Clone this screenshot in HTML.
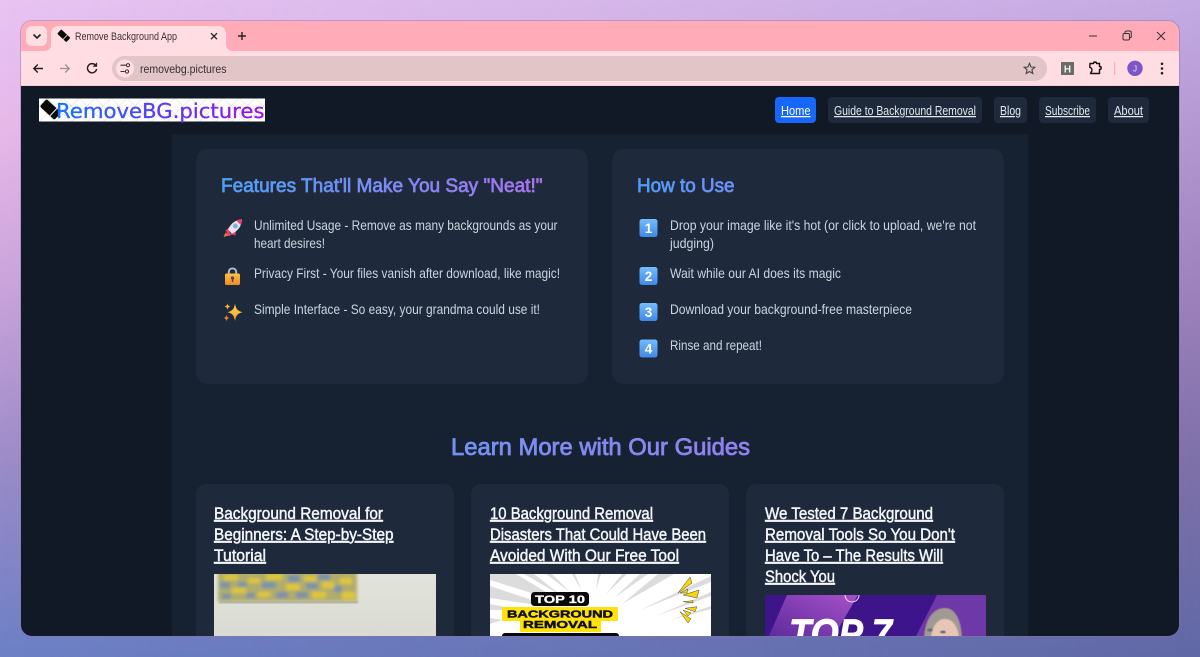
<!DOCTYPE html>
<html lang="en">
<head>
<meta charset="utf-8">
<title>Remove Background App</title>
<style>
html,body{margin:0;padding:0;width:1200px;height:657px;overflow:hidden;background:#a890d0}
svg{display:block;position:absolute;left:0;top:0}
text{font-family:"Liberation Sans",Arial,sans-serif;white-space:pre}
.li{font-size:14px;fill:#cbd5e1}
.h3{font-size:19px;font-weight:400;stroke-width:.7}
.gt{font-size:16.5px;font-weight:400;fill:#f4f6f9;stroke:#f4f6f9;stroke-width:.45;text-decoration:underline}
.nav{font-size:12.5px;fill:#e2e8f0;text-decoration:underline}
</style>
</head>
<body>
<svg width="1200" height="657" viewBox="0 0 1200 657" xmlns="http://www.w3.org/2000/svg">
<defs>
<linearGradient id="bgL" x1="0" y1="0" x2="0" y2="1">
<stop offset="0" stop-color="#e8c4f2"/><stop offset=".2" stop-color="#e6b8e8"/><stop offset=".45" stop-color="#c8a2da"/><stop offset=".7" stop-color="#9c8cc8"/><stop offset="1" stop-color="#6c80c6"/>
</linearGradient>
<linearGradient id="bgR" x1="0" y1="0" x2="0" y2="1">
<stop offset="0" stop-color="#c4aae2"/><stop offset=".45" stop-color="#9c80bc"/><stop offset=".7" stop-color="#7e70a8"/><stop offset="1" stop-color="#6068a6"/>
</linearGradient>
<linearGradient id="fade" x1="0" y1="0" x2="1" y2="0">
<stop offset="0" stop-color="#000"/><stop offset="1" stop-color="#fff"/>
</linearGradient>
<mask id="m" maskUnits="userSpaceOnUse" x="0" y="0" width="1200" height="657"><rect width="1200" height="657" fill="url(#fade)"/></mask>
<clipPath id="win"><rect x="21" y="21" width="1158" height="615" rx="11"/></clipPath>
<linearGradient id="g1" gradientUnits="userSpaceOnUse" x1="221" y1="0" x2="545" y2="0"><stop offset="0" stop-color="#4f9ff6"/><stop offset="1" stop-color="#a874ee"/></linearGradient>
<linearGradient id="g2" gradientUnits="userSpaceOnUse" x1="637" y1="0" x2="735" y2="0"><stop offset="0" stop-color="#5299f7"/><stop offset="1" stop-color="#6f90f5"/></linearGradient>
<linearGradient id="g3" gradientUnits="userSpaceOnUse" x1="451" y1="0" x2="750" y2="0"><stop offset="0" stop-color="#7590f2"/><stop offset="1" stop-color="#9280ee"/></linearGradient>
<linearGradient id="lg" gradientUnits="userSpaceOnUse" x1="56" y1="0" x2="265" y2="0"><stop offset="0" stop-color="#1474ff"/><stop offset=".5" stop-color="#5a3cf0"/><stop offset="1" stop-color="#a20ee8"/></linearGradient>
<linearGradient id="key" x1="0" y1="0" x2="0" y2="1"><stop offset="0" stop-color="#74bcfb"/><stop offset="1" stop-color="#3f88e8"/></linearGradient>
<linearGradient id="lock" x1="0" y1="0" x2="0" y2="1"><stop offset="0" stop-color="#ffc23c"/><stop offset="1" stop-color="#f08a24"/></linearGradient>
<linearGradient id="spark" x1="0" y1="0" x2="0" y2="1"><stop offset="0" stop-color="#ffd84a"/><stop offset="1" stop-color="#fb9a2e"/></linearGradient>
<linearGradient id="band" x1="1" y1="0" x2="0" y2="1"><stop offset="0" stop-color="#a850c8"/><stop offset="1" stop-color="#5a2a9c"/></linearGradient>
<linearGradient id="wall" x1="0" y1="0" x2="0" y2="1"><stop offset="0" stop-color="#e2e4dc"/><stop offset="1" stop-color="#d9dbd2"/></linearGradient>
<pattern id="dm" width="16" height="16" patternUnits="userSpaceOnUse" patternTransform="translate(39 98)"><path d="M0 8 8 0 16 8 8 16Z" fill="none" stroke="#e4e4e4" stroke-width=".7"/></pattern>
<filter id="b1" x="-10%" y="-10%" width="120%" height="130%"><feGaussianBlur stdDeviation="1.5"/></filter>
<filter id="b2" x="-10%" y="-10%" width="120%" height="120%"><feGaussianBlur stdDeviation=".6"/></filter>
<clipPath id="paint"><rect x="218" y="570" width="139" height="32" rx="1"/></clipPath>
</defs>

<!-- desktop backdrop -->
<rect width="1200" height="657" fill="url(#bgL)"/>
<rect width="1200" height="657" fill="url(#bgR)" mask="url(#m)"/>
<rect x="20.5" y="20.5" width="1159" height="616" rx="11.5" fill="none" stroke="#8a70a8" stroke-opacity=".45"/>

<g clip-path="url(#win)">
<!-- tab strip -->
<rect x="21" y="21" width="1158" height="31" fill="#ffabb8"/>
<rect x="21" y="51" width="1158" height="35" fill="#ffdde3"/>
<rect x="21" y="85.5" width="1158" height="1" fill="#e8b8c4"/>
<rect x="26" y="26" width="21" height="20" rx="6" fill="#ffdde3"/>
<path d="M21 51H44C48 51 51 49 51 45V34C51 29 54 26 59 26H218C223 26 226 29 226 34V44C226 49 229 51 234 51Z" fill="#ffdde3"/>
<path d="M33.5 34.5 37 38 40.5 34.5" fill="none" stroke="#222" stroke-width="1.6"/>
<g transform="translate(58 30)"><rect x="2.800" y="-.5" width="6" height="12.500" rx="1" transform="rotate(-47 5.800 5.800)" fill="#0b0b0b"/><path d="M4.900 9.600 9.300 5" stroke="#ffdde3" stroke-width=".8"/></g>
<text x="75" y="40" font-size="11" fill="#3a3034" textLength="102" lengthAdjust="spacingAndGlyphs">Remove Background App</text>
<path d="M211 33.2 217 39.2M217 33.2 211 39.2" stroke="#222" stroke-width="1.3"/>
<path d="M242 32v8M238 36h8" stroke="#222" stroke-width="1.4"/>

<!-- window controls -->
<path d="M1089 36h8" stroke="#333" stroke-width="1"/>
<rect x="1123" y="33.5" width="6.5" height="6.5" rx="1.4" fill="none" stroke="#333"/>
<path d="M1125 33V32.4C1125 31.6 1125.6 31 1126.4 31H1129.6C1130.6 31 1131.3 31.7 1131.3 32.7V36.4C1131.3 37.2 1130.7 37.7 1130 37.7" fill="none" stroke="#333"/>
<path d="M1157 32 1165 40M1165 32 1157 40" stroke="#333" stroke-width="1"/>

<!-- toolbar -->
<path d="M43 68.5H34M37.8 64.5 33.8 68.5 37.8 72.5" fill="none" stroke="#222" stroke-width="1.4"/>
<path d="M60 68.5H69M65.2 64.5 69.2 68.5 65.2 72.5" fill="none" stroke="#9a8e92" stroke-width="1.3"/>
<path d="M95.7 65.4A4.6 4.6 0 1 0 96.6 69" fill="none" stroke="#222" stroke-width="1.4"/>
<path d="M96.8 63V66.5H93.3Z" fill="#222" stroke="#222" stroke-width=".6"/>
<rect x="112" y="56" width="935" height="25" rx="12.5" fill="#e1c5c7"/>
<circle cx="125" cy="68.5" r="9" fill="#ffdde3"/>
<path d="M120.5 65.2h5.5M120.5 71.5h4.2" stroke="#333" stroke-width="1.1"/>
<circle cx="128" cy="65.2" r="1.6" fill="none" stroke="#333" stroke-width="1"/>
<circle cx="127" cy="71.5" r="1.6" fill="none" stroke="#333" stroke-width="1"/>
<text x="140" y="73" font-size="12" fill="#3a3034" textLength="86.5" lengthAdjust="spacingAndGlyphs">removebg.pictures</text>
<path d="M1029.500 63.300 1031 67 1034.800 67.300 1031.900 69.800 1032.800 73.500 1029.500 71.500 1026.200 73.500 1027.100 69.800 1024.200 67.300 1028 67Z" fill="none" stroke="#444" stroke-width="1.1"/>
<rect x="1061" y="62" width="13" height="13" rx=".5" fill="#6a6a68"/>
<text x="1067.500" y="72.300" font-size="10" font-weight="700" fill="#f0f0f0" text-anchor="middle">H</text>
<path d="M1090 63.500H1093.500C1093.500 61.500 1096.500 61.500 1096.500 63.500H1099.500V66.500C1101.800 66.500 1101.800 69.500 1099.500 69.500V73.500H1090.500L1091.800 71C1092.500 69 1091 67.500 1089.800 67.300Z" fill="none" stroke="#111" stroke-width="1.4" stroke-linejoin="round"/>
<rect x="1114" y="62" width="1.300" height="13" fill="#ffabb8"/>
<circle cx="1135" cy="68.300" r="7.700" fill="#7a57c4"/>
<text x="1135" y="71.500" font-size="8.500" fill="#e8e0f8" text-anchor="middle">J</text>
<circle cx="1162" cy="63.800" r="1.300" fill="#222"/><circle cx="1162" cy="68.500" r="1.300" fill="#222"/><circle cx="1162" cy="73.200" r="1.300" fill="#222"/>

<!-- page -->
<rect x="21" y="86" width="1158" height="552" fill="#111927"/>
<rect x="172" y="134" width="856" height="504" fill="#162131"/>

<!-- logo -->
<rect x="39" y="98.500" width="226" height="23" fill="#fff"/>
<rect x="39" y="98.500" width="226" height="23" fill="url(#dm)"/>
<g transform="translate(41 100)"><rect x="4.500" y="-0.500" width="10" height="20" rx="1.800" transform="rotate(-47 9.500 9.500)" fill="#0a0a0a"/><path d="M9 15.800 15.800 8.500" stroke="#fff" stroke-width="1"/></g>
<text x="56" y="118" style="font-family:'DejaVu Sans',sans-serif" font-size="20" fill="url(#lg)" stroke="url(#lg)" stroke-width=".3" textLength="208.500" lengthAdjust="spacingAndGlyphs">RemoveBG.pictures</text>

<!-- nav -->
<rect x="775" y="97" width="41" height="26" rx="4" fill="#1767fb"/>
<text x="781" y="115" class="nav" style="fill:#fff" textLength="29.500" lengthAdjust="spacingAndGlyphs">Home</text>
<rect x="828" y="97" width="154" height="26" rx="4" fill="#1e293b"/>
<text x="834" y="115" class="nav" textLength="142" lengthAdjust="spacingAndGlyphs">Guide to Background Removal</text>
<rect x="994" y="97" width="33" height="26" rx="4" fill="#1e293b"/>
<text x="1000" y="115" class="nav" textLength="21" lengthAdjust="spacingAndGlyphs">Blog</text>
<rect x="1039" y="97" width="57" height="26" rx="4" fill="#1e293b"/>
<text x="1045" y="115" class="nav" textLength="45" lengthAdjust="spacingAndGlyphs">Subscribe</text>
<rect x="1108" y="97" width="41" height="26" rx="4" fill="#1e293b"/>
<text x="1114" y="115" class="nav" textLength="29" lengthAdjust="spacingAndGlyphs">About</text>

<!-- feature cards -->
<rect x="196" y="149" width="392" height="235" rx="12" fill="#1e293b"/>
<rect x="612" y="149" width="392" height="235" rx="12" fill="#1e293b"/>
<text x="221" y="192" class="h3" fill="url(#g1)" stroke="url(#g1)" textLength="321.500" lengthAdjust="spacingAndGlyphs">Features That'll Make You Say "Neat!"</text>
<text x="637" y="192" class="h3" fill="url(#g2)" stroke="url(#g2)" textLength="97.500" lengthAdjust="spacingAndGlyphs">How to Use</text>

<text x="254" y="230" class="li" textLength="303.500" lengthAdjust="spacingAndGlyphs">Unlimited Usage - Remove as many backgrounds as your</text>
<text x="254" y="248" class="li" textLength="71" lengthAdjust="spacingAndGlyphs">heart desires!</text>
<text x="254" y="278" class="li" textLength="306" lengthAdjust="spacingAndGlyphs">Privacy First - Your files vanish after download, like magic!</text>
<text x="254" y="314" class="li" textLength="286" lengthAdjust="spacingAndGlyphs">Simple Interface - So easy, your grandma could use it!</text>

<text x="670" y="230" class="li" textLength="306" lengthAdjust="spacingAndGlyphs">Drop your image like it's hot (or click to upload, we're not</text>
<text x="670" y="248" class="li" textLength="44" lengthAdjust="spacingAndGlyphs">judging)</text>
<text x="670" y="278" class="li" textLength="171" lengthAdjust="spacingAndGlyphs">Wait while our AI does its magic</text>
<text x="670" y="314" class="li" textLength="242" lengthAdjust="spacingAndGlyphs">Download your background-free masterpiece</text>
<text x="670" y="350" class="li" textLength="92" lengthAdjust="spacingAndGlyphs">Rinse and repeat!</text>

<!-- rocket -->
<g transform="translate(223 219)">
<path d="M.5 18 2.500 13.500 6 16.500Z" fill="#f0743a"/>
<path d="M2 12 7.500 7.500 6.500 13.500ZM12.500 16.500 13 10.500 7.500 15Z" fill="#e83f78"/>
<path d="M19 .3C13.500.5 8 4 5 10.500L9 14.700C15 12 18.800 7 19 .3Z" fill="#ebe2ea"/>
<path d="M19 .3C17 .4 15 .9 13.500 1.800L17.800 6C18.600 4.300 19 2.400 19 .3Z" fill="#ee3f70"/>
<circle cx="12.400" cy="7" r="2.200" fill="#6fb2ec" stroke="#a8b4c4" stroke-width=".7"/>
<path d="M4.500 11.500 8.800 15.500 6.500 17 3.500 14Z" fill="#ee3f78"/>
</g>
<!-- lock -->
<g transform="translate(225 267)">
<path d="M3.800 7.500V5.200C3.800 .2 11.200 .2 11.200 5.200V7.500" fill="none" stroke="#b7bdc8" stroke-width="1.900"/>
<rect x="0" y="6.500" width="15" height="11.500" rx="1.500" fill="url(#lock)"/>
<circle cx="7.500" cy="11" r="1.600" fill="#5a3a7a"/><rect x="6.800" y="11.500" width="1.500" height="3.500" fill="#5a3a7a"/>
</g>
<!-- sparkles -->
<g transform="translate(223 303)" fill="url(#spark)">
<path d="M12 .8C13 6 14.300 7.800 19.500 9.200 14.300 10.500 13 12.300 12 18 11 12.300 9.700 10.500 4.500 9.200 9.700 7.800 11 6 12 .8Z"/>
<path d="M4.500.3C4.800 2.400 5.500 3.200 7.600 3.600 5.500 4 4.800 4.800 4.500 7 4.200 4.800 3.500 4 1.400 3.600 3.500 3.200 4.200 2.400 4.500.3Z"/>
<path d="M3.500 11.500C3.800 13.900 4.500 14.600 6.700 15 4.500 15.400 3.800 16.100 3.500 18.700 3.200 16.100 2.500 15.400.3 15 2.500 14.600 3.200 13.900 3.500 11.500Z" fill="#f0843a"/>
</g>
<!-- keycaps -->
<g font-size="13.500" font-weight="700" fill="#fff" text-anchor="middle">
<rect x="639.500" y="219" width="18" height="18" rx="2.500" fill="url(#key)"/><text x="648.500" y="233">1</text>
<rect x="639.500" y="267" width="18" height="18" rx="2.500" fill="url(#key)"/><text x="648.500" y="281">2</text>
<rect x="639.500" y="303" width="18" height="18" rx="2.500" fill="url(#key)"/><text x="648.500" y="317">3</text>
<rect x="639.500" y="339.500" width="18" height="18" rx="2.500" fill="url(#key)"/><text x="648.500" y="353.500">4</text>
</g>

<!-- guides heading -->
<text x="451" y="455" font-size="24" fill="url(#g3)" stroke="url(#g3)" stroke-width=".8" textLength="299" lengthAdjust="spacingAndGlyphs">Learn More with Our Guides</text>

<!-- guide cards -->
<rect x="196" y="484" width="258" height="170" rx="10" fill="#1e293b"/>
<rect x="471" y="484" width="258" height="170" rx="10" fill="#1e293b"/>
<rect x="746" y="484" width="258" height="170" rx="10" fill="#1e293b"/>

<text x="214" y="519" class="gt" textLength="169" lengthAdjust="spacingAndGlyphs">Background Removal for</text>
<text x="214" y="540" class="gt" textLength="179.500" lengthAdjust="spacingAndGlyphs">Beginners: A Step-by-Step</text>
<text x="214" y="561" class="gt" textLength="52" lengthAdjust="spacingAndGlyphs">Tutorial</text>

<text x="490" y="519" class="gt" textLength="163" lengthAdjust="spacingAndGlyphs">10 Background Removal</text>
<text x="490" y="540" class="gt" textLength="216" lengthAdjust="spacingAndGlyphs">Disasters That Could Have Been</text>
<text x="490" y="561" class="gt" textLength="189" lengthAdjust="spacingAndGlyphs">Avoided With Our Free Tool</text>

<text x="765" y="519" class="gt" textLength="168" lengthAdjust="spacingAndGlyphs">We Tested 7 Background</text>
<text x="765" y="540" class="gt" textLength="190" lengthAdjust="spacingAndGlyphs">Removal Tools So You Don't</text>
<text x="765" y="561" class="gt" textLength="178" lengthAdjust="spacingAndGlyphs">Have To – The Results Will</text>
<text x="765" y="582" class="gt" textLength="70" lengthAdjust="spacingAndGlyphs">Shock You</text>

<!-- image 1: painting on wall -->
<rect x="214" y="574" width="222" height="64" fill="url(#wall)"/>
<rect x="219" y="601" width="139" height="2.500" fill="#b8b8b0" filter="url(#b2)"/>
<svg x="214" y="574" width="222" height="30" viewBox="214 574 222 30">
<g filter="url(#b1)">
<rect x="218" y="570" width="139" height="31.500" fill="#b0ac6c"/>
<g fill="#e0c832"><rect x="224" y="575" width="14" height="5"/><rect x="248" y="578" width="12" height="5"/><rect x="266" y="574" width="16" height="6"/><rect x="286" y="584" width="14" height="6"/><rect x="304" y="576" width="12" height="5"/><rect x="322" y="582" width="12" height="6"/><rect x="340" y="578" width="12" height="6"/><rect x="232" y="588" width="14" height="5"/><rect x="258" y="592" width="12" height="5"/><rect x="312" y="592" width="14" height="6"/><rect x="342" y="592" width="13" height="7"/></g>
<g fill="#7a92a8"><rect x="220" y="582" width="10" height="6"/><rect x="238" y="582" width="9" height="5"/><rect x="262" y="582" width="14" height="6"/><rect x="288" y="575" width="12" height="7"/><rect x="318" y="574" width="12" height="6"/><rect x="334" y="586" width="8" height="6"/><rect x="276" y="592" width="12" height="6"/><rect x="296" y="592" width="12" height="6"/><rect x="222" y="594" width="9" height="5"/><rect x="246" y="593" width="9" height="5"/><rect x="306" y="583" width="12" height="6"/></g>
</g>
</svg>

<!-- image 2: comic rays -->
<svg x="490" y="574" width="221" height="64" viewBox="0 0 221 64">
<rect width="221" height="64" fill="#fff"/>
<g fill="#dcdcdc">
<path d="M0 0H26L76 30 0 6Z"/><path d="M0 12 66 34 0 24Z"/><path d="M0 30 30 36 0 36Z"/><path d="M0 44 12 46 0 50Z"/>
<path d="M34 0H44L72 22ZM56 0H62L80 18ZM82 0H85L92 17ZM108 0H111L106 16ZM132 0H137L116 20ZM150 0H158L124 24ZM168 0H184L132 30ZM221 2V8L150 36ZM221 18V22L166 42ZM221 32V35L180 46Z"/>
</g>
<rect x="41" y="18" width="58" height="14" rx="3.500" fill="#0a0a0a"/>
<text x="70" y="29" font-size="11" font-weight="700" fill="#fff" text-anchor="middle" stroke="#fff" stroke-width=".3" textLength="50" lengthAdjust="spacingAndGlyphs">TOP 10</text>
<path d="M13 34H127V46H110V57H31V46H13Z" fill="#ffe20a" stroke="#ffe20a" stroke-width="2" stroke-linejoin="round"/>
<text x="70" y="43.500" font-size="10" font-weight="700" fill="#111" text-anchor="middle" stroke="#111" stroke-width=".45" textLength="106" lengthAdjust="spacingAndGlyphs">BACKGROUND</text>
<text x="70" y="54" font-size="10" font-weight="700" fill="#111" text-anchor="middle" stroke="#111" stroke-width=".45" textLength="74" lengthAdjust="spacingAndGlyphs">REMOVAL</text>
<rect x="12" y="59" width="117" height="8" rx="3" fill="#0a0a0a"/>
<g fill="#f5d60e" stroke="#222" stroke-width=".4">
<path d="M200 3 202 9 188 19Z"/><path d="M190 19 198 15 197 19Z"/><path d="M193 21 209 16 207 24Z"/><path d="M193 27.700 203 26.700 203 29Z"/><path d="M195 34.300 207 32.700 205 37.700Z"/><path d="M193 36 201 39 198 42Z"/><path d="M190 37.700 201 45 198 49Z"/>
</g>
</svg>

<!-- image 3: top 7 -->
<svg x="765" y="595" width="221" height="43" viewBox="0 0 221 43">
<rect width="221" height="43" fill="#3d1489"/>
<path d="M22 0H93L68 43H3Z" fill="url(#band)"/>
<path d="M172 0H221V43H150Z" fill="#6e38a8"/>
<path d="M80 0A7 7 0 0 0 94 0" fill="none" stroke="#ece4f6" stroke-width="1"/>
<text x="24" y="52" font-size="40" font-weight="700" font-style="italic" fill="#fff" stroke="#fff" stroke-width=".8" textLength="103" lengthAdjust="spacingAndGlyphs">TOP 7</text>
<g filter="url(#b2)">
<path d="M159 43C160 24 168 13 180 13 190 13 196 24 197 43Z" fill="#a09a92"/>
<path d="M166 43C167 32 172 24 180 24 188 24 193 32 194 43Z" fill="#e8c6b6"/>
<ellipse cx="165" cy="35" rx="3" ry="1.500" fill="#5c6a78"/><ellipse cx="178" cy="37" rx="3" ry="1.500" fill="#5c6a78"/>
</g>
</svg>
</g>
</svg>
</body>
</html>
